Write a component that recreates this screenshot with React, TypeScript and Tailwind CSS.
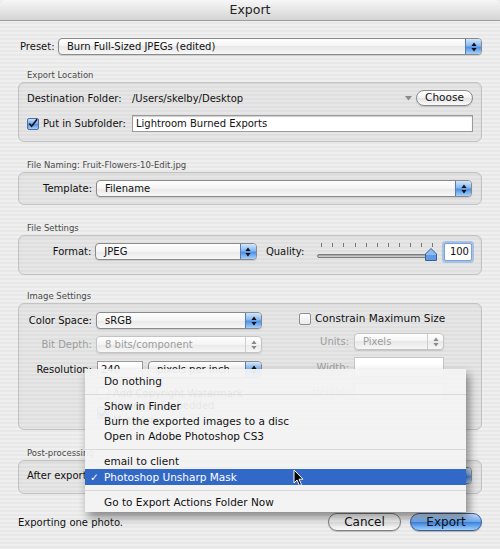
import type { ReactNode } from "react";

const font = "font-['DejaVu_Sans','Lucida_Grande',sans-serif]";

function Stepper({ disabled }: { disabled?: boolean }) {
  return (
    <div
      className={`flex w-[16px] shrink-0 items-center justify-center border-l ${
        disabled
          ? "border-[#cdcdcd]"
          : "border-[#5a7bb0] bg-[linear-gradient(#d3e6fc,#86b8f1_45%,#4f90e6_55%,#a6d1f9)]"
      }`}
    >
      <svg width="6" height="10" viewBox="0 0 6 10">
        <path d="M3 0.5 L5.6 3.9 H0.4Z M3 9.5 L5.6 6.1 H0.4Z" fill={disabled ? "#8a8a8a" : "#111"} />
      </svg>
    </div>
  );
}

function Popup({ text, className = "", disabled }: { text: string; className?: string; disabled?: boolean }) {
  return (
    <div
      className={`flex h-[17px] overflow-hidden rounded-[4px] border ${
        disabled ? "border-[#c4c4c4] text-[#9d9d9d]" : "border-[#8a8a8a] text-[#111]"
      } bg-[linear-gradient(#fefefe,#f4f4f4_50%,#e8e8e8_50%,#f7f7f7)] shadow-[0_1px_1px_rgba(0,0,0,0.12)] ${className}`}
    >
      <span className="flex-1 truncate pl-[8px] leading-[15px]">{text}</span>
      <Stepper disabled={disabled} />
    </div>
  );
}

function Group({ label, className = "", boxClass = "", children }: { label: string; className?: string; boxClass?: string; children: ReactNode }) {
  return (
    <div className={className}>
      <div className="h-[11px] pl-[9px] text-[8.5px] leading-[11px] text-[#4a4a4a]">{label}</div>
      <div className={`rounded-[6px] border border-[#c3c3c3] bg-black/[0.035] shadow-[inset_0_1px_2px_rgba(0,0,0,0.05)] ${boxClass}`}>
        {children}
      </div>
    </div>
  );
}

function Check({ checked }: { checked?: boolean }) {
  return checked ? (
    <div className="flex h-[12px] w-[12px] shrink-0 items-center justify-center rounded-[2px] border border-[#4d6ea6] bg-[linear-gradient(#c9e0fb,#6ea7ec_50%,#4a8de6_51%,#a5d0f9)]">
      <svg width="11" height="11" viewBox="0 0 11 11">
        <path d="M1.5 5.5 L4 8.5 L10 0.8" stroke="#111" strokeWidth="1.8" fill="none" />
      </svg>
    </div>
  ) : (
    <div className="h-[12px] w-[12px] shrink-0 rounded-[2px] border border-[#8e8e8e] bg-[linear-gradient(#ffffff,#eaeaea)]" />
  );
}

const menuItem = "h-[15px] pl-[19px] leading-[15px]";
const sep = "flex h-[10px] items-center";

export default function App() {
  return (
    <div
      className={`relative h-[549px] w-[500px] overflow-hidden bg-[repeating-linear-gradient(180deg,#efefef_0px,#efefef_2px,#e8e8e8_2px,#e8e8e8_4px)] text-[10px] text-[#111] ${font}`}
    >
      <div className="flex h-[21px] items-center justify-center rounded-t-[6px] border-b border-[#9c9c9c] bg-[linear-gradient(#f7f7f7,#e6e6e6_50%,#d4d4d4)] text-[12.5px] text-[#222]">
        Export
      </div>

      <div className="px-[18px]">
        <div className="mt-[17px] flex h-[17px] items-center">
          <span className="w-[40px] pl-[2px]">Preset:</span>
          <Popup text="Burn Full-Sized JPEGs (edited)" className="flex-1" />
        </div>

        <Group label="Export Location" className="mt-[15px]" boxClass="mt-[1px] h-[60px] px-[8px] pt-[7px]">
          <div className="flex h-[16px] items-center">
            <span className="w-[105px]">Destination Folder:</span>
            <span className="flex-1">/Users/skelby/Desktop</span>
            <svg width="7" height="5" viewBox="0 0 7 5" className="mr-[4px]">
              <path d="M0 0 H7 L3.5 4.5Z" fill="#8a8a8a" />
            </svg>
            <div className="flex h-[16px] w-[57px] items-center justify-center rounded-full border border-[#8a8a8a] bg-[linear-gradient(#ffffff,#f2f2f2_50%,#e2e2e2_51%,#fafafa)] text-[10.5px] shadow-[0_1px_1px_rgba(0,0,0,0.15)]">
              Choose
            </div>
          </div>
          <div className="mt-[9px] flex h-[17px] items-center">
            <Check checked />
            <span className="ml-[4px] w-[89px]">Put in Subfolder:</span>
            <div className="flex h-[17px] flex-1 items-center border border-[#9a9a9a] bg-white pl-[3px] shadow-[inset_0_1px_1px_rgba(0,0,0,0.2)]">
              Lightroom Burned Exports
            </div>
          </div>
        </Group>

        <Group label="File Naming:  Fruit-Flowers-10-Edit.jpg" className="mt-[18px]" boxClass="mt-[1px] h-[33px] pr-[9px] pt-[7px]">
          <div className="flex h-[17px] items-center">
            <span className="w-[73px] text-right">Template:</span>
            <Popup text="Filename" className="ml-[4px] flex-1" />
          </div>
        </Group>

        <Group label="File Settings" className="mt-[18px]" boxClass="mt-[1px] h-[40px] pr-[9px] pt-[7px]">
          <div className="flex h-[17px] items-center">
            <span className="w-[73px] text-right">Format:</span>
            <Popup text="JPEG" className="ml-[4px] w-[163px]" />
            <span className="ml-[9px]">Quality:</span>
            <div className="relative ml-[13px] h-[20px] w-[121px]">
              <div className="flex justify-between px-[4px] pt-[1px]">
                {Array.from({ length: 11 }).map((_, i) => (
                  <div key={i} className="h-[4px] w-px bg-[#777]" />
                ))}
              </div>
              <div className="mt-[7px] h-[4px] rounded-full border border-[#7d7d7d] bg-[linear-gradient(#9a9a9a,#d8d8d8)]" />
              <svg width="12" height="13" viewBox="0 0 12 13" className="absolute right-[0px] top-[6px]">
                <path d="M6 0.5 L11.5 6 V12.5 H0.5 V6Z" fill="#8fbaf0" stroke="#3b5f94" />
                <path d="M1 7 H11 V12 H1Z" fill="#5f9ae6" />
              </svg>
            </div>
            <div className="ml-[7px] flex h-[18px] w-[28px] items-center justify-end rounded-[2px] border border-[#7aa2dc] bg-white pr-[2px] shadow-[0_0_0_2px_rgba(120,165,225,0.55)]">
              100
            </div>
          </div>
        </Group>

        <Group label="Image Settings" className="mt-[16px]" boxClass="mt-[1px] h-[127px] flex pt-[8px]">
          <div className="w-[243px] shrink-0">
            <div className="flex h-[17px] items-center">
              <span className="w-[73px] text-right">Color Space:</span>
              <Popup text="sRGB" className="ml-[4px] w-[166px]" />
            </div>
            <div className="mt-[7px] flex h-[17px] items-center">
              <span className="w-[73px] text-right text-[#9d9d9d]">Bit Depth:</span>
              <Popup text="8 bits/component" disabled className="ml-[4px] w-[166px]" />
            </div>
            <div className="mt-[8px] flex h-[17px] items-center">
              <span className="w-[73px] text-right">Resolution:</span>
              <div className="ml-[5px] flex h-[17px] w-[46px] items-center border border-[#9a9a9a] bg-white pl-[3px]">240</div>
              <Popup text="pixels per inch" className="ml-[5px] w-[114px]" />
            </div>
            <div className="mt-[8px] flex h-[14px] items-center pl-[78px]">
              <Check />
              <span className="ml-[4px]">Add Copyright Watermark</span>
            </div>
            <div className="mt-[6px] flex h-[14px] items-center pl-[78px]">
              <Check checked />
              <span className="ml-[4px]">Minimize Embedded Metadata</span>
            </div>
          </div>
          <div className="ml-[37px] w-[170px] shrink-0">
            <div className="flex h-[14px] items-center whitespace-nowrap">
              <Check />
              <span className="ml-[4px] text-[10.5px]">Constrain Maximum Size</span>
            </div>
            <div className="mt-[7px] flex h-[17px] items-center">
              <span className="w-[50px] text-right text-[#9d9d9d]">Units:</span>
              <Popup text="Pixels" disabled className="ml-[5px] w-[90px]" />
            </div>
            <div className="mt-[7px] flex h-[20px] items-center">
              <span className="w-[50px] text-right text-[#9d9d9d]">Width:</span>
              <div className="ml-[5px] h-[20px] w-[90px] border border-[#c4c4c4] bg-white" />
            </div>
            <div className="mt-[6px] flex h-[17px] items-center">
              <span className="w-[50px] text-right text-[#9d9d9d]">Height:</span>
              <div className="ml-[5px] h-[17px] w-[90px] border border-[#c4c4c4] bg-white" />
            </div>
          </div>
        </Group>

        <Group label="Post-processing" className="mt-[18px]" boxClass="mt-[1px] h-[34px] pr-[9px] pt-[6px]">
          <div className="flex h-[17px] items-center">
            <span className="w-[73px] pl-[8px]">After export:</span>
            <Popup text="" className="ml-[4px] flex-1" />
          </div>
        </Group>

        <div className="mt-[19px] flex h-[18px] items-center">
          <span className="flex-1">Exporting one photo.</span>
          <div className="flex h-[18px] w-[73px] items-center justify-center rounded-full border border-[#7f7f7f] bg-[linear-gradient(#ffffff,#f0f0f0_50%,#dedede_51%,#fbfbfb)] text-[12px] shadow-[0_1px_1px_rgba(0,0,0,0.2)]">
            Cancel
          </div>
          <div className="ml-[9px] flex h-[18px] w-[72px] items-center justify-center rounded-full border border-[#3d5f99] bg-[linear-gradient(#c6defb,#6ea8ef_48%,#3d83e3_52%,#9fd0fb)] text-[12px] shadow-[0_1px_1px_rgba(0,0,0,0.25)]">
            Export
          </div>
        </div>
      </div>

      <div className="absolute left-[85px] top-[369px] h-[143px] w-[381px] bg-[#f3f3f3]/[0.94] pt-[5px] text-[10.5px] shadow-[3px_5px_9px_rgba(0,0,0,0.45)]">
        <div className={menuItem}>Do nothing</div>
        <div className={sep}><div className="h-px w-full bg-[#d9d9d9]" /></div>
        <div className={menuItem}>Show in Finder</div>
        <div className={menuItem}>Burn the exported images to a disc</div>
        <div className={menuItem}>Open in Adobe Photoshop CS3</div>
        <div className={sep}><div className="h-px w-full bg-[#d9d9d9]" /></div>
        <div className={menuItem}>email to client</div>
        <div className="relative h-[16px] bg-[#3269c6] pl-[19px] leading-[16px] text-white">
          <span className="absolute left-[5px]">✓</span>
          Photoshop Unsharp Mask
        </div>
        <div className={sep}><div className="h-px w-full bg-[#d9d9d9]" /></div>
        <div className={menuItem}>Go to Export Actions Folder Now</div>
      </div>

      <svg width="12" height="18" viewBox="0 0 12 18" className="absolute left-[293px] top-[469px]">
        <path d="M1 1 V14 L4 11 L6.5 16.5 L8.5 15.5 L6 10.2 H10Z" fill="#000" stroke="#fff" strokeWidth="1" />
      </svg>
    </div>
  );
}
